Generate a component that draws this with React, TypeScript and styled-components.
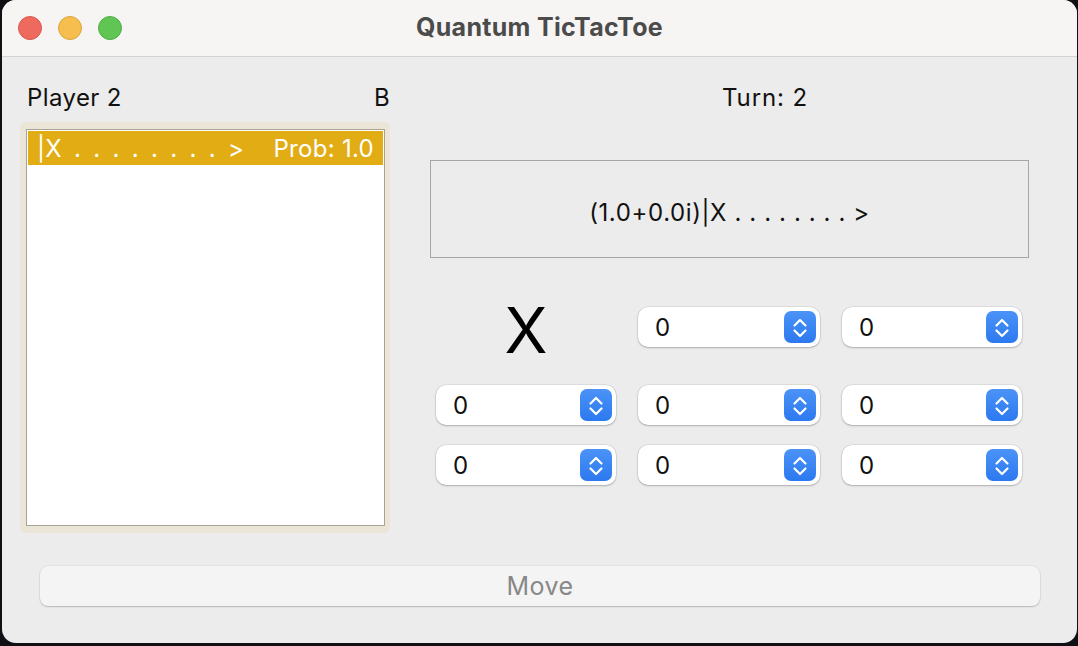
import React from 'react';
import styled, { createGlobalStyle } from 'styled-components';

const GlobalStyle = createGlobalStyle`
  html, body {
    margin: 0;
    padding: 0;
    background: #101014;
  }
  body {
    font-family: Inter, "Noto Sans", "Liberation Sans", sans-serif;
    -webkit-font-smoothing: antialiased;
  }
`;

const cells: (string | null)[] = ['X', null, null, null, null, null, null, null, null];

const Window = styled.div`
  width: 1075px;
  height: 643px;
  margin-left: 2px;
  border-radius: 14px;
  overflow: hidden;
  background: #ececec;
  display: flex;
  flex-direction: column;
`;

const TitleBar = styled.div`
  height: 56px;
  flex: none;
  display: grid;
  grid-template-columns: 1fr auto 1fr;
  align-items: center;
  background: #f6f5f4;
  border-bottom: 1px solid #d4d3d2;
`;

const Lights = styled.div`
  display: flex;
  gap: 16px;
  padding-left: 16px;
`;

const Light = styled.span<{ $fill: string; $edge: string }>`
  width: 24px;
  height: 24px;
  border-radius: 50%;
  box-sizing: border-box;
  background: ${(p) => p.$fill};
  border: 1px solid ${(p) => p.$edge};
`;

const Title = styled.div`
  font-size: 25px;
  font-weight: 700;
  color: #4b4b4b;
  letter-spacing: 0.3px;
  padding-bottom: 2px;
`;

const Main = styled.div`
  display: flex;
  gap: 40px;
  padding: 20px 0 0 18px;
`;

const LeftColumn = styled.div`
  width: 370px;
  display: flex;
  flex-direction: column;
`;

const RightColumn = styled.div`
  width: 599px;
  display: flex;
  flex-direction: column;
`;

const Header = styled.div<{ $center?: boolean }>`
  height: 40px;
  display: flex;
  align-items: center;
  justify-content: ${(p) => (p.$center ? 'center' : 'space-between')};
  padding: ${(p) => (p.$center ? '0 0 0 71px' : '0 0 0 7px')};
  font-size: 24px;
  letter-spacing: ${(p) => (p.$center ? '0.9px' : '0.4px')};
  color: #111;
`;

const ListRing = styled.div`
  margin-top: 5px;
  height: 411px;
  box-sizing: border-box;
  padding: 7px 5px 7px 6px;
  background: #ebe5d7;
  border-radius: 6px;
  display: flex;
`;

const ListBox = styled.div`
  flex: 1;
  background: #ffffff;
  border: 1px solid #a8a396;
  padding: 1px;
`;

const ListRow = styled.div<{ $selected?: boolean }>`
  height: 34px;
  display: flex;
  align-items: center;
  justify-content: space-between;
  padding: 0 9px 0 9px;
  font-size: 24px;
  letter-spacing: 0.3px;
  color: ${(p) => (p.$selected ? '#ffffff' : '#111')};
  background: ${(p) => (p.$selected ? '#e2ac15' : 'transparent')};
`;

const Ket = styled.span`
  word-spacing: 5px;
  white-space: pre;
`;

const StateBox = styled.div`
  margin-top: 43px;
  height: 98px;
  box-sizing: border-box;
  border: 1px solid #a6a6a6;
  display: flex;
  align-items: center;
  justify-content: center;
  font-size: 24px;
  letter-spacing: 0.6px;
  color: #111;
  padding-top: 6px;
`;

const Board = styled.div`
  margin-top: 49px;
  padding: 0 7px 0 6px;
  display: grid;
  grid-template-columns: 180px 182px 180px;
  grid-template-rows: 58px 40px 40px;
  column-gap: 22px;
  row-gap: 20px;
  align-items: start;
`;

const Mark = styled.div`
  height: 58px;
  display: flex;
  justify-content: center;
  font-size: 63px;
  line-height: 63px;
  margin-top: -8px;
  color: #000;
`;

const Combo = styled.div`
  height: 40px;
  box-sizing: border-box;
  display: flex;
  align-items: center;
  justify-content: space-between;
  padding: 0 4px 0 17px;
  background: #ffffff;
  border-radius: 10px;
  box-shadow: 0 0 0 0.5px rgba(0, 0, 0, 0.12), 0 1px 2px rgba(0, 0, 0, 0.22);
  font-size: 24px;
  color: #111;
`;

const Stepper = styled.div`
  width: 32px;
  height: 32px;
  border-radius: 7px;
  background: linear-gradient(#4b93f7, #2c79f0);
  display: flex;
`;

const Footer = styled.div`
  padding: 33px 37px 0 38px;
`;

const MoveButton = styled.div`
  height: 40px;
  display: flex;
  align-items: center;
  justify-content: center;
  background: #f4f4f4;
  border-radius: 8px;
  box-shadow: 0 0 0 0.5px rgba(0, 0, 0, 0.08), 0 1px 1.5px rgba(0, 0, 0, 0.2);
  font-size: 25px;
  letter-spacing: 0.4px;
  color: #888888;
`;

const Chevrons = () => (
  <svg width="32" height="32" viewBox="0 0 32 32">
    <path d="M10.5 14.5 L16 9 L21.5 14.5" fill="none" stroke="#fff" strokeWidth="2.2" strokeLinecap="round" strokeLinejoin="round" />
    <path d="M10.5 19.5 L16 25 L21.5 19.5" fill="none" stroke="#fff" strokeWidth="2.2" strokeLinecap="round" strokeLinejoin="round" />
  </svg>
);

export default function App() {
  return (
    <>
      <GlobalStyle />
      <Window>
        <TitleBar>
          <Lights>
            <Light $fill="#ee6a5f" $edge="#d8574d" />
            <Light $fill="#f5be4f" $edge="#dca43d" />
            <Light $fill="#61c554" $edge="#4fae44" />
          </Lights>
          <Title>Quantum TicTacToe</Title>
          <div />
        </TitleBar>
        <Main>
          <LeftColumn>
            <Header>
              <span>Player 2</span>
              <span>B</span>
            </Header>
            <ListRing>
              <ListBox>
                <ListRow $selected>
                  <Ket>|X . . . . . . . . &gt;</Ket>
                  <span>Prob: 1.0</span>
                </ListRow>
              </ListBox>
            </ListRing>
          </LeftColumn>
          <RightColumn>
            <Header $center>Turn: 2</Header>
            <StateBox>(1.0+0.0i)|X . . . . . . . . &gt;</StateBox>
            <Board>
              {cells.map((c, i) =>
                c ? (
                  <Mark key={i}>{c}</Mark>
                ) : (
                  <Combo key={i}>
                    <span>0</span>
                    <Stepper>
                      <Chevrons />
                    </Stepper>
                  </Combo>
                )
              )}
            </Board>
          </RightColumn>
        </Main>
        <Footer>
          <MoveButton>Move</MoveButton>
        </Footer>
      </Window>
    </>
  );
}
